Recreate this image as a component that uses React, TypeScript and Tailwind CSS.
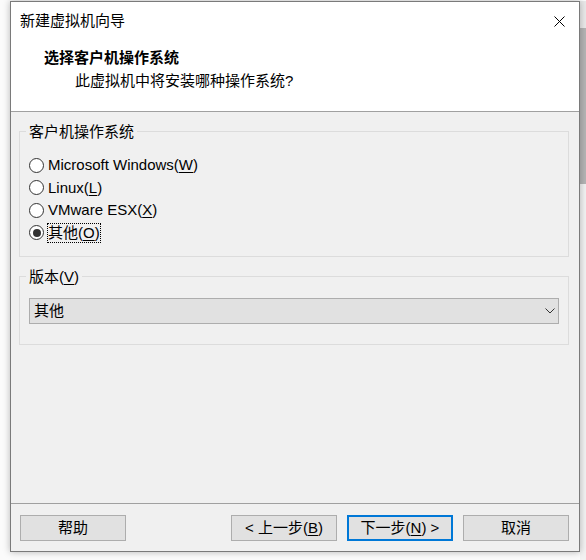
import { ReactNode } from 'react';

const Key = ({ children }: { children: ReactNode }) => (
    <span className="underline underline-offset-2 decoration-1">{children}</span>
);

const Radio = ({ checked, children }: { checked?: boolean; children: ReactNode }) => (
    <div className="h-[22.5px] flex items-center">
        <div className="w-[15px] h-[15px] rounded-full border border-[#333] bg-white flex items-center justify-center shrink-0">
            {checked && <div className="w-[8px] h-[8px] rounded-full bg-[#333]" />}
        </div>
        <span
            className={
                checked
                    ? "ml-[4px] leading-[18px] outline-1 outline-dotted outline-black"
                    : "ml-[4px] leading-[18px]"
            }
        >
            {children}
        </span>
    </div>
);

const Button = ({ children, primary }: { children: ReactNode; primary?: boolean }) => (
    <div
        className={
            primary
                ? "w-[106px] h-[26px] bg-[#e1e1e1] border-2 border-[#0078d7] flex items-center justify-center"
                : "w-[106px] h-[26px] bg-[#e1e1e1] border border-[#adadad] flex items-center justify-center"
        }
    >
        {children}
    </div>
);

const App = () => {
    return (
        <div className="w-[586px] h-[560px] bg-[#fbfbfb] flex pl-[10px] pt-[1px] text-[15px] text-black font-['Liberation_Sans','Noto_Sans_CJK_SC',sans-serif]">
            <div className="relative z-10 w-[570px] h-[551px] border border-[#7a7a7a] bg-[#f0f0f0] flex flex-col shadow-[0_0_7px_rgba(0,0,0,0.28)]">
                {/* title bar + header */}
                <div className="h-[110px] shrink-0 bg-white border-b border-[#a0a0a0]">
                    <div className="h-[38px] flex items-center justify-between pl-[9px] pr-[14px]">
                        <span className="leading-[20px]">新建虚拟机向导</span>
                        <svg width="11" height="11" viewBox="0 0 11 11">
                            <path d="M0.5 0.5 L10.5 10.5 M10.5 0.5 L0.5 10.5" stroke="#000" strokeWidth="1" />
                        </svg>
                    </div>
                    <div className="mt-[8px] pl-[33px] font-bold leading-[20px]">选择客户机操作系统</div>
                    <div className="mt-[3px] pl-[64px] leading-[20px]">此虚拟机中将安装哪种操作系统?</div>
                </div>

                {/* body */}
                <div className="flex-1 pl-[8px]">
                    <fieldset className="mt-[9px] w-[550px] border border-[#dcdcdc] pl-[9px] pt-[12px] pb-[12px]">
                        <legend className="ml-[-3px] px-[3px] leading-[21px]">客户机操作系统</legend>
                        <Radio>Microsoft Windows(<Key>W</Key>)</Radio>
                        <Radio>Linux(<Key>L</Key>)</Radio>
                        <Radio>VMware ESX(<Key>X</Key>)</Radio>
                        <Radio checked>其他(<Key>O</Key>)</Radio>
                    </fieldset>

                    <fieldset className="mt-[9px] w-[550px] border border-[#dcdcdc] pl-[9px] pr-[9px] pt-[11px] pb-[20px]">
                        <legend className="ml-[-3px] px-[3px] leading-[21px]">版本(<Key>V</Key>)</legend>
                        <div className="h-[26px] bg-[#e1e1e1] border border-[#adadad] flex items-center justify-between pl-[4px] pr-[3px]">
                            <span>其他</span>
                            <svg width="10" height="6" viewBox="0 0 10 6">
                                <path d="M0.5 0.5 L5 5 L9.5 0.5" stroke="#333" strokeWidth="1" fill="none" />
                            </svg>
                        </div>
                    </fieldset>
                </div>

                {/* footer */}
                <div className="h-[48px] shrink-0 border-t border-[#a0a0a0] flex items-start pt-[11px] pl-[9px] pr-[10px]">
                    <Button>帮助</Button>
                    <div className="flex-1" />
                    <div className="flex gap-[10px]">
                        <Button>&lt; 上一步(<Key>B</Key>)</Button>
                        <Button primary>下一步(<Key>N</Key>) &gt;</Button>
                        <Button>取消</Button>
                    </div>
                </div>
            </div>
            <div className="w-[6px] flex flex-col">
                <div className="h-[27px] bg-[#e9e9e9]" />
                <div className="h-[156px] bg-[#b4b4b4]" />
                <div className="flex-1 bg-[#f2f2f2]" />
            </div>
        </div>
    );
};

export default App;
